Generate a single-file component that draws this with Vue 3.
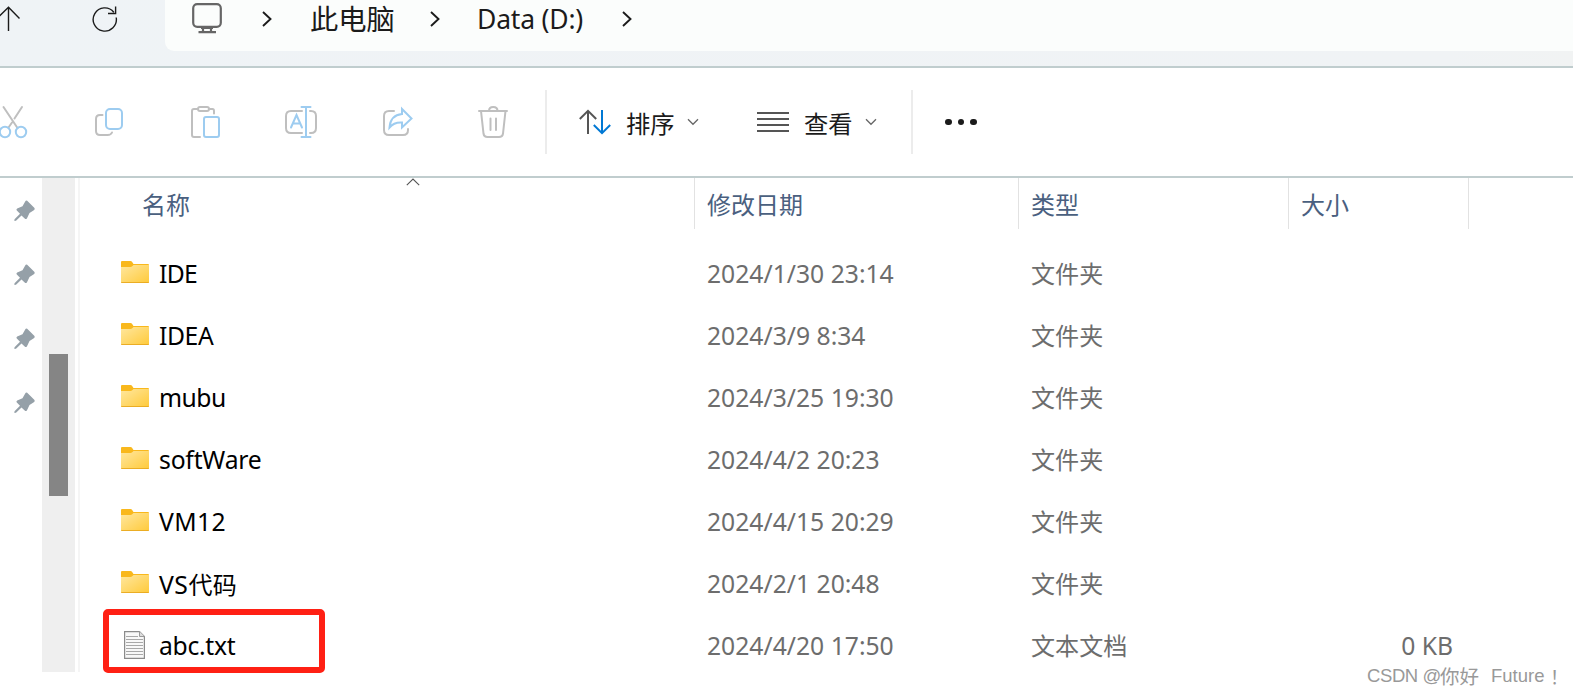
<template>
  <div class="explorer">
    <header class="address-bar">
      <svg class="nav-up" viewBox="0 0 22 26">
        <path d="M8.5 25V1.5M-3 12.5L8.5 1.2L19.5 12.5" />
      </svg>
      <svg class="nav-refresh" viewBox="0 0 26 26">
        <path d="M24.2 11.5A11.6 11.6 0 1 1 21.8 6.2M23.6 .5V7.5H16" />
      </svg>
      <div class="path-box">
        <svg class="pc-icon" viewBox="0 0 30 32">
          <rect x="1.2" y="2.2" width="27.6" height="22.6" rx="4" />
          <path d="M11 25V30M19 25V30M6.5 30.2H24M9 26H21" />
        </svg>
        <svg class="crumb-arrow first" viewBox="0 0 10 16"><path d="M1 1L8.5 8L1 15" /></svg>
        <span class="crumb crumb-pc">此电脑</span>
        <svg class="crumb-arrow second" viewBox="0 0 10 16"><path d="M1 1L8.5 8L1 15" /></svg>
        <span class="crumb crumb-drive">Data (D:)</span>
        <svg class="crumb-arrow third" viewBox="0 0 10 16"><path d="M1 1L8.5 8L1 15" /></svg>
      </div>
    </header>

    <div class="toolbar">
      <div class="tools">
        <svg class="tool" viewBox="0 0 40 40">
          <path class="gray" d="M11.5 5L25.5 26M30 5L22.5 16.5M20 20.5L16.5 25.5" />
          <circle class="blue" cx="13" cy="30" r="5.2" />
          <circle class="blue" cx="29" cy="30" r="5.2" />
        </svg>
        <svg class="tool" viewBox="0 0 40 40">
          <path class="gray" d="M13.5 13H11Q7 13 7 17V29Q7 33 11 33H18.500Q22 33 23 30.500" />
          <rect class="blue" x="17" y="7" width="16" height="20" rx="4" />
        </svg>
        <svg class="tool" viewBox="0 0 40 40">
          <path class="gray" d="M12.5 7H9Q7 7 7 9V33Q7 35 9 35H15M25 7H27.500Q29 7 29 9V11.5" />
          <rect class="gray" x="13" y="5" width="11" height="4" rx="2" />
          <rect class="blue" x="19" y="15" width="15" height="20" rx="2" />
        </svg>
        <svg class="tool" viewBox="0 0 40 40">
          <path class="gray" d="M21 9H10Q5 9 5 14V26Q5 31 10 31H21M29 9H30Q35 9 35 14V26Q35 31 30 31H29" />
          <path class="blue" d="M25 5V35M20.5 5H29.5M20.5 35H29.5M10 25.500L15.500 13L21 25.500M12 21.500H19" />
        </svg>
        <svg class="tool" viewBox="0 0 40 40">
          <path class="gray" d="M17 9H12Q7 9 7 14V28Q7 33 12 33H26Q31 33 31 28V27" />
          <path class="blue" d="M25 7L34.500 16.500L25 25.500V20.500Q17 20 12.500 25.500Q13.500 13 25 12Z" />
        </svg>
        <svg class="tool" viewBox="0 0 40 40">
          <path class="gray" d="M6 9H34M8 9L10.5 31.5Q11 35 14.500 35H26Q29.500 35 30 31.5L32.500 9M16 9Q16 5 20.2 5Q24.5 5 24.5 9M17.500 16.500V28M23 16.500V28" />
        </svg>
      </div>
      <div class="tool-group sort-group">
        <svg class="sort-icon" viewBox="0 0 32 26">
          <path class="up" d="M9 25V2M.8 10L9 1.8L17.2 10" />
          <path class="down" d="M23 1V24M14.8 16L23 24.2L31.2 16" />
        </svg>
        <span class="tool-label">排序</span>
        <svg class="chevron" viewBox="0 0 12 8"><path d="M1 1.2L6 6.3L11 1.2" /></svg>
      </div>
      <div class="tool-group view-group">
        <svg class="view-icon" viewBox="0 0 32 20">
          <path d="M0 1H32M0 7H32M0 13H32M0 19H32" />
        </svg>
        <span class="tool-label">查看</span>
        <svg class="chevron" viewBox="0 0 12 8"><path d="M1 1.2L6 6.3L11 1.2" /></svg>
      </div>
      <div class="more"><i></i><i></i><i></i></div>
    </div>

    <main class="content">
      <aside class="sidebar">
        <svg v-for="n in 4" :key="n" class="pin" viewBox="0 0 22 22">
          <path d="M13.2 .8L20.500 8Q21.3 9.5 19.8 10.3L15.500 13L13 18.2Q12 19.800 10.7 18.6L7.5 15.5L2 20.8L.4 20.9L.5 19.3L6 13.8L2.8 10.5Q1.8 9.3 3.2 8.5L8.5 6.2L11.2 1.5Q12 0 13.2 .8Z" />
        </svg>
      </aside>
      <div class="scrollbar"><div class="thumb"></div></div>
      <section class="file-list">
        <div class="list-header">
          <div class="col-name">
            名称
            <svg class="sort-mark" viewBox="0 0 14 8"><path d="M.8 7.2L7 1L13.2 7.2" /></svg>
          </div>
          <div class="col-date">修改日期</div>
          <div class="col-type">类型</div>
          <div class="col-size">大小</div>
        </div>
        <div v-for="file in files" :key="file.name" class="file-row">
          <div class="col-name">
            <svg v-if="file.folder" class="folder-icon" viewBox="0 0 28 22">
              <defs>
                <linearGradient id="folderFill" x1="0" y1="0" x2="1" y2="1">
                  <stop offset="0" stop-color="#ffe79f" />
                  <stop offset="1" stop-color="#ffca3a" />
                </linearGradient>
              </defs>
              <path d="M0 1Q0 0 1 0H9.500Q10.500 0 11 .7L12.500 3H27Q28 3 28 4V10H0Z" fill="#f9b81c" />
              <path d="M0 6H9.500Q10.500 6 11.200 5.300L12.500 4H28V21Q28 22 27 22H1Q0 22 0 21Z" fill="url(#folderFill)" />
              <path d="M.2 21Q.4 21.6 1 21.6H27Q27.600 21.6 27.8 21" fill="none" stroke="#e9a91f" />
            </svg>
            <svg v-else class="text-icon" viewBox="0 0 21 28">
              <path d="M.6 .6H15.500L20.4 5.5V27.4H.6Z" fill="#f8f8f8" stroke="#8b8b8b" stroke-width="1.2" />
              <path d="M15.5 .6V5.500H20.4" fill="#ddd" stroke="#999" />
              <path d="M2 5.5H14M2 8.5H19M2 11.5H19M2 14.5H19M2 17.5H19M2 20.5H19M2 23.5H19" stroke="#a8a8a8" />
            </svg>
            <span class="file-name" :style="{ letterSpacing: file.spacing + 'px' }">{{ file.name }}<span v-if="file.suffix" class="cjk">{{ file.suffix }}</span></span>
          </div>
          <div class="col-date">{{ file.date }}</div>
          <div class="col-type">{{ file.type }}</div>
          <div class="col-size">{{ file.size }}</div>
        </div>
        <div class="highlight"></div>
      </section>
    </main>
    <div class="watermark">
      <span class="site">CSDN @</span><span class="nick">你好</span><span class="future">Future</span><span class="bang">！</span>
    </div>
  </div>
</template>

<script setup>
import { ref } from 'vue'

const files = ref([
  { name: 'IDE', date: '2024/1/30 23:14', type: '文件夹', folder: true, spacing: -0.7 },
  { name: 'IDEA', date: '2024/3/9 8:34', type: '文件夹', folder: true, spacing: -0.4 },
  { name: 'mubu', date: '2024/3/25 19:30', type: '文件夹', folder: true, spacing: -0.5 },
  { name: 'softWare', date: '2024/4/2 20:23', type: '文件夹', folder: true, spacing: -0.2 },
  { name: 'VM12', date: '2024/4/15 20:29', type: '文件夹', folder: true, spacing: 0.4 },
  { name: 'VS', suffix: '代码', date: '2024/2/1 20:48', type: '文件夹', folder: true, spacing: 0.5 },
  { name: 'abc.txt', date: '2024/4/20 17:50', type: '文本文档', size: '0 KB', spacing: -0.3 }
])
</script>

<style>
body {
  margin: 0;
  background: #fff;
}
</style>

<style scoped>
.explorer {
  position: relative;
  width: 1573px;
  height: 695px;
  overflow: hidden;
  background: #fff;
  font-family: "Noto Sans", "Noto Sans CJK SC", sans-serif;
  font-size: 24.7px;
  color: #1b1b1b;
}

svg {
  display: block;
  flex-shrink: 0;
  fill: none;
}

.address-bar {
  display: flex;
  align-items: flex-start;
  height: 66px;
  background: linear-gradient(90deg, #eff3f6, #f0f3f5 92%, #f1f3f3);
  border-bottom: 2px solid #c0cdce;
}

.nav-up {
  width: 22px;
  height: 26px;
  margin-top: 6px;
  stroke: #1b1b1b;
  stroke-width: 1.4;
}

.nav-refresh {
  width: 26px;
  height: 26px;
  margin: 6px 0 0 70px;
  stroke: #1b1b1b;
  stroke-width: 1.4;
}

.path-box {
  display: flex;
  align-items: center;
  flex: 1;
  height: 51px;
  margin-left: 47px;
  background: #fbfdfc;
  border-bottom-left-radius: 9px;
}

.pc-icon {
  width: 30px;
  height: 32px;
  margin: -16px 0 0 27px;
  stroke: #666;
  stroke-width: 2.2;
}

.crumb-arrow {
  width: 10px;
  height: 16px;
  margin-top: -13px;
  stroke: #1b1b1b;
  stroke-width: 1.9;
}

.crumb-arrow.first {
  margin-left: 40px;
}

.crumb-arrow.second {
  margin-left: 35px;
}

.crumb-arrow.third {
  margin-left: 38px;
}

.crumb {
  line-height: 40px;
  margin-top: -13px;
  white-space: nowrap;
}

.crumb-pc {
  width: 85px;
  margin: -15px 0 0 38px;
  font-family: "Noto Sans CJK SC", sans-serif;
  font-size: 28.3px;
}

.crumb-drive {
  width: 107px;
  margin-left: 37px;
  font-size: 26.5px;
  letter-spacing: -0.2px;
}

.toolbar {
  display: flex;
  align-items: center;
  height: 108px;
  border-bottom: 2px solid #c0cdce;
}

.tools {
  display: flex;
  gap: 56px;
  width: 545px;
  height: 64px;
  align-items: center;
  border-right: 2px solid #ececec;
}

.tool {
  width: 40px;
  height: 40px;
  stroke-width: 2;
  stroke-linecap: round;
}

.tool:first-child {
  margin-left: -8px;
  margin-right: 1px;
}

.gray {
  stroke: #bfbfbf;
}

.blue {
  stroke: #9dccf0;
}

.tool-group {
  display: flex;
  align-items: center;
  height: 64px;
}

.sort-icon {
  width: 32px;
  height: 26px;
  margin-left: 32px;
  stroke-width: 2;
}

.sort-icon .up {
  stroke: #555;
}

.sort-icon .down {
  stroke: #0078d4;
}

.tool-label {
  width: 49px;
  margin-left: 15px;
  font-family: "Noto Sans CJK SC", sans-serif;
  font-size: 24.3px;
}

.chevron {
  width: 12px;
  height: 8px;
  margin-left: 12px;
  stroke: #666;
  stroke-width: 1.3;
}

.view-group {
  padding-left: 58px;
  padding-right: 34px;
  border-right: 2px solid #ececec;
}

.view-icon {
  width: 32px;
  height: 20px;
  stroke: #555;
  stroke-width: 2;
}

.more {
  display: flex;
  gap: 6px;
  margin-left: 32px;
}

.more i {
  width: 6.5px;
  height: 6.5px;
  border-radius: 50%;
  background: #1b1b1b;
}

.content {
  display: flex;
  height: 494px;
}

.sidebar {
  display: flex;
  flex-direction: column;
  gap: 42px;
  width: 42px;
  padding-top: 22px;
  box-sizing: border-box;
}

.pin {
  width: 22px;
  height: 22px;
  margin-left: 14px;
  fill: #95a0a8;
}

.scrollbar {
  width: 33px;
  padding-top: 176px;
  box-sizing: border-box;
  background: #efefef;
}

.thumb {
  width: 19px;
  height: 142px;
  margin-left: 7px;
  background: #858585;
}

.file-list {
  position: relative;
  width: 1493px;
  margin-left: 3px;
  border-left: 2px solid #f5f5f5;
}

.list-header,
.file-row {
  display: flex;
}

.list-header {
  height: 51px;
  margin-bottom: 14px;
  font-family: "Noto Sans CJK SC", sans-serif;
  font-size: 24px;
  line-height: 51px;
  color: #4a6080;
}

.list-header > div {
  border-right: 1px solid #e2e2e2;
  box-sizing: border-box;
}

.col-name {
  position: relative;
  width: 615px;
}

.list-header .col-name {
  padding-left: 62px;
}

.col-date {
  width: 324px;
  padding-left: 12px;
  box-sizing: border-box;
}

.col-type {
  width: 270px;
  padding-left: 12px;
  box-sizing: border-box;
}

.col-size {
  width: 180px;
  padding-left: 12px;
  box-sizing: border-box;
}

.sort-mark {
  position: absolute;
  left: 326px;
  top: 0;
  width: 14px;
  height: 8px;
  stroke: #555;
  stroke-width: 1.1;
}

.file-row {
  height: 62px;
  line-height: 62px;
  color: #6d6d6d;
  white-space: nowrap;
}

.file-row .col-name {
  display: flex;
  align-items: center;
  color: #000;
}

.file-row .col-type {
  font-family: "Noto Sans CJK SC", sans-serif;
  font-size: 24.1px;
  line-height: 60px;
}

.file-row .col-size {
  padding-left: 0;
  padding-right: 16px;
  text-align: right;
}

.folder-icon {
  width: 28px;
  height: 22px;
  margin: -4px 10px 0 41px;
}

.text-icon {
  width: 21px;
  height: 28px;
  margin: -2px 14px 0 44px;
}

.cjk {
  font-family: "Noto Sans CJK SC", sans-serif;
  font-size: 24px;
}

/* red frame over the selected text file */
.highlight {
  position: absolute;
  left: 23px;
  top: 431px;
  width: 222px;
  height: 64px;
  border: 6px solid #ff2014;
  border-radius: 5px;
  box-sizing: border-box;
}

.watermark {
  position: absolute;
  left: 1367px;
  top: 662px;
  display: flex;
  align-items: center;
  height: 28px;
  font-family: "Liberation Sans", "Noto Sans CJK SC", sans-serif;
  font-size: 18.5px;
  color: #999;
  white-space: nowrap;
}

.site {
  width: 73px;
  letter-spacing: -0.4px;
}

.nick {
  margin-top: -2px;
  font-size: 19.5px;
}

.future {
  width: 55px;
  margin-left: 12px;
}

.bang {
  margin-left: 4px;
}
</style>
